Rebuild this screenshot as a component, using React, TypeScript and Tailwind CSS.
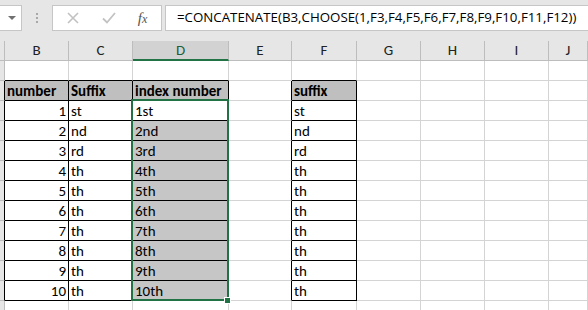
import React from 'react';

const COLS = ['', 'B', 'C', 'D', 'E', 'F', 'G', 'H', 'I', 'J'];
const WIDTHS = ['w-[5px]', 'w-[64px]', 'w-[64px]', 'w-[96px]', 'w-[63px]', 'w-[65px]', 'w-[64px]', 'w-[64px]', 'w-[64px]', 'w-[60px]'];
const SUFFIX = ['st', 'nd', 'rd', 'th', 'th', 'th', 'th', 'th', 'th', 'th'];

const cellFont = { fontFamily: 'Carlito, Calibri, Lato, "Liberation Sans", sans-serif' };

// B..D and F hold bordered tables, rows 2..12
function bordered(r: number, c: number) {
  if (r < 2 || r > 12) return false;
  return c === 1 || c === 2 || c === 3 || c === 5;
}

function cellValue(r: number, c: number): { text: string; right?: boolean; bold?: boolean } | null {
  if (r === 2) {
    if (c === 1) return { text: 'number', bold: true };
    if (c === 2) return { text: 'Suffix', bold: true };
    if (c === 3) return { text: 'index number', bold: true };
    if (c === 5) return { text: 'suffix', bold: true };
    return null;
  }
  if (r >= 3 && r <= 12) {
    const n = r - 2;
    const s = SUFFIX[n - 1];
    if (c === 1) return { text: String(n), right: true };
    if (c === 2 || c === 5) return { text: s };
    if (c === 3) return { text: `${n}${s}` };
  }
  return null;
}

function Cell({ r, c }: { r: number; c: number }) {
  const rightBlack = bordered(r, c) || bordered(r, c + 1);
  const bottomBlack = bordered(r, c) || bordered(r + 1, c);
  const isHeader = r === 2 && bordered(r, c);
  const isSel = c === 3 && r >= 4 && r <= 12;
  const v = cellValue(r, c);

  let bg = 'bg-white';
  if (c === 0) bg = 'bg-[#e6e6e6]';
  else if (isHeader) bg = 'bg-[#bfbfbf]';
  else if (isSel) bg = 'bg-[#c6c6c6]';

  const rb = c === 0 ? (rightBlack ? 'border-r-black' : 'border-r-[#bdbdbd]') : rightBlack ? 'border-r-black' : 'border-r-[#d4d4d4]';
  const bb = c === 0 ? 'border-b-[#bdbdbd]' : bottomBlack ? 'border-b-black' : 'border-b-[#d4d4d4]';

  return (
    <div
      className={`${WIDTHS[c]} ${c === 9 ? 'flex-1' : 'shrink-0'} h-[20px] border-r border-b ${rb} ${bb} ${bg} flex items-end overflow-hidden px-[2px] ${v?.right ? 'justify-end' : 'justify-start'}`}
    >
      {v && (
        <span className={`text-[15px] leading-[18px] text-black whitespace-nowrap ${v.bold ? 'font-bold' : ''}`} style={cellFont}>
          {v.text}
        </span>
      )}
    </div>
  );
}

function FormulaBar() {
  return (
    <div className="h-[41px] bg-[#e6e6e6] flex items-start pt-[5px]">
      <div className="w-[22px] shrink-0 h-[26px] bg-white border-y border-r border-[#c6c6c6] flex items-center justify-end pr-[5px]">
        <svg width="8" height="5" viewBox="0 0 8 5">
          <path d="M0 0 L8 0 L4 4 Z" fill="#707070" />
        </svg>
      </div>
      <div className="w-[30px] shrink-0 flex flex-col items-center gap-[2px] pt-[8px]">
        <span className="w-[2px] h-[2px] bg-[#a8a8a8]" />
        <span className="w-[2px] h-[2px] bg-[#a8a8a8]" />
        <span className="w-[2px] h-[2px] bg-[#a8a8a8]" />
      </div>
      <div className="w-[110px] shrink-0 h-[26px] bg-white border border-[#c6c6c6] flex items-center">
        <div className="w-[38px] flex justify-center pl-[2px]">
          <svg width="12" height="12" viewBox="0 0 12 12">
            <path d="M1 1 L11 11 M11 1 L1 11" stroke="#c2c2c2" strokeWidth="1.6" />
          </svg>
        </div>
        <div className="w-[35px] flex justify-center">
          <svg width="14" height="12" viewBox="0 0 14 12">
            <path d="M1 6.5 L5 10.5 L13 1" stroke="#c2c2c2" strokeWidth="1.8" fill="none" />
          </svg>
        </div>
        <div className="w-[33px] flex justify-center">
          <span className="text-[15px] italic text-[#555555] leading-none" style={{ fontFamily: '"Liberation Serif", serif' }}>
            f<span className="text-[12px]">x</span>
          </span>
        </div>
      </div>
      <div className="ml-[3px] flex-1 min-w-0 overflow-hidden h-[26px] bg-white border-y border-l border-[#c6c6c6] flex items-center pl-[11px]">
        <span className="text-[13.3px] text-black whitespace-nowrap" style={{ fontFamily: '"Open Sans", "Noto Sans", sans-serif' }}>
          =CONCATENATE(B3,CHOOSE(1,F3,F4,F5,F6,F7,F8,F9,F10,F11,F12))
        </span>
      </div>
    </div>
  );
}

function ColumnHeaders() {
  return (
    <div className="flex h-[20px]">
      {COLS.map((name, c) => (
        <div
          key={c}
          className={`${WIDTHS[c]} ${c === 9 ? 'flex-1' : 'shrink-0'} h-[20px] border-r border-[#bdbdbd] flex items-center justify-center ${
            c === 3 ? 'bg-[#d2d2d2] border-b-2 border-b-[#217346] text-[#1e5e3a]' : 'bg-[#e6e6e6] border-b border-b-[#bdbdbd] text-[#222222]'
          }`}
        >
          <span className="text-[15px] leading-none" style={cellFont}>
            {name}
          </span>
        </div>
      ))}
    </div>
  );
}

export default function App() {
  const rows = Array.from({ length: 13 }, (_, i) => i + 1);
  return (
    <div className="w-[588px] h-[310px] overflow-hidden bg-white">
      <FormulaBar />
      <ColumnHeaders />
      <div className="relative">
        {rows.map((r) => (
          <div key={r} className="flex">
            {COLS.map((_, c) => (
              <Cell key={c} r={r} c={c} />
            ))}
          </div>
        ))}
        {/* selection outline D3:D12 */}
        <div className="absolute left-[131px] top-[38px] w-[98px] h-[202px] border-2 border-[#217346] pointer-events-none" />
        <div className="absolute left-[224px] top-[236px] w-[7px] h-[7px] bg-[#217346] border border-white pointer-events-none" />
      </div>
    </div>
  );
}
